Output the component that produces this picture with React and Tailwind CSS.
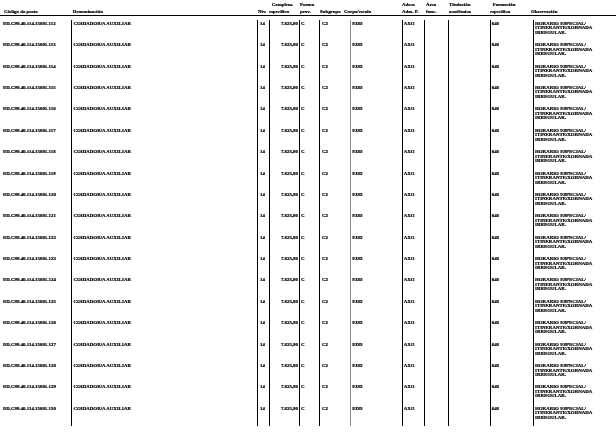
import React from 'react';

const cols = 'grid grid-cols-[71px_186px_12px_30px_20px_31px_52px_22px_24px_42px_43px_83px]';

const rows = [];
for (let n = 112; n <= 130; n++) {
    rows.push({ code: `ED.C99.40.114.15001.${n}` });
}

const line = 'border-l border-black';

const Head = ({ top, bottom, className = '' }) => (
    <div className={`flex flex-col whitespace-nowrap ${className}`}>
        <span className="h-[6.5px] leading-[6.5px]">{top || ''}</span>
        <span className="h-[6.5px] leading-[6.5px]">{bottom || ''}</span>
    </div>
);

const App = () => {
    return (
        <div className="w-[616px] h-[439px] bg-white overflow-hidden text-black font-bold text-[4.9px] font-['Liberation_Serif',serif] [will-change:transform] [-webkit-text-stroke:0.2px_black]">
            {/* cabeceira */}
            <div className={`${cols} h-[16px] pt-[2px] border-b border-black`}>
                <Head bottom="Código do posto" className="pl-[4px]" />
                <Head bottom="Denominación" className="pl-[1.7px]" />
                <Head bottom="Niv." className="pl-[1px]" />
                <div className="flex flex-col whitespace-nowrap">
                    <span className="h-[6.5px] leading-[6.5px] pl-[2.7px]">Complem.</span>
                    <span className="h-[6.5px] leading-[6.5px]">específico</span>
                </div>
                <Head top="Forma" bottom="prov." className="pl-[1px]" />
                <Head bottom="Subgrupo" className="pl-[1px]" />
                <Head bottom="Corpo/escala" className="-ml-[6px]" />
                <Head top="Adscr." bottom="Adm. P." />
                <Head top="Área" bottom="func." className="pl-[2px]" />
                <Head top="Titulación" bottom="académica" className="pl-[1px]" />
                <div className="flex flex-col whitespace-nowrap">
                    <span className="h-[6.5px] leading-[6.5px] pl-[2.7px]">Formación</span>
                    <span className="h-[6.5px] leading-[6.5px]">específica</span>
                </div>
                <Head bottom="Observación" className="-ml-[2px]" />
            </div>

            {/* filas */}
            <div className="pt-[4px]">
                {rows.map((r) => (
                    <div key={r.code} className={`${cols} h-[21.4px] leading-[4.5px]`}>
                        <div className="pl-[3px] pt-[1.8px] whitespace-nowrap">{r.code}</div>
                        <div className={`${line} pl-[1.5px] pt-[1.8px] whitespace-nowrap`}>COIDADOR/A AUXILIAR</div>
                        <div className={`${line} pl-[2px] pt-[1.8px]`}>14</div>
                        <div className={`${line} pr-[1px] pt-[1.8px] text-right`}>7.825,90</div>
                        <div className={`${line} pl-[1px] pt-[1.8px]`}>C</div>
                        <div className={`${line} pl-[2px] pt-[1.8px]`}>C2</div>
                        <div className="border-l-[1.5px] border-[#8c8c8c] pl-[1.2px] pt-[1.8px]">EDD</div>
                        <div className={`${line} pl-[0.7px] pt-[1.8px]`}>AXG</div>
                        <div className={line}></div>
                        <div className={line}></div>
                        <div className={`${line} pl-[0.7px] pt-[1.8px]`}>648</div>
                        <div className={`${line} pl-[1px] pt-[1.8px] flex flex-col whitespace-nowrap`}>
                            <span>HORARIO ESPECIAL/</span>
                            <span>ITINERANTE/XORNADA</span>
                            <span>IRREGULAR.</span>
                        </div>
                    </div>
                ))}
            </div>
        </div>
    );
};

export default App;
